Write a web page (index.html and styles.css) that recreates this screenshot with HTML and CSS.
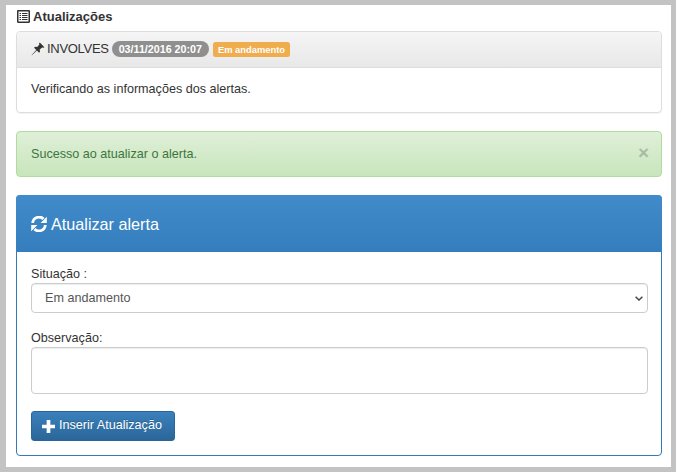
FILE: index.html
```html
<!DOCTYPE html>
<html lang="pt-BR">
<head>
<meta charset="utf-8">
<title>Atualizações</title>
<link rel="stylesheet" href="styles.css">
</head>
<body>
<main class="page">
  <h4 class="title">
    <svg class="ico-list" viewBox="0 0 13 13" width="13" height="13"><path fill="#333" fill-rule="evenodd" d="M0 1.2C0 .5.5 0 1.2 0h10.6c.7 0 1.2.5 1.2 1.2v10.6c0 .7-.5 1.2-1.2 1.2H1.2C.5 13 0 12.500 0 11.800zM1.500 1.500v10h10v-10z"/><path fill="#333" d="M2.500 3h1.500v1H2.500zM5 3h5.500v1H5zM2.500 5h1.500v1H2.500zM5 5h5.500v1H5zM2.500 7h1.500v1H2.500zM5 7h5.500v1H5zM2.500 9h1.500v1H2.500zM5 9h5.500v1H5z"/></svg>
    Atualizações
  </h4>
  <section class="panel">
    <header class="panel-head">
      <svg class="ico-pin" viewBox="0 0 14 14" width="14" height="14"><path fill="#333" d="M8.800 0.600 13.400 5.200 12.500 5.800 11.200 5.400 8.700 7.600 9 9.800 8.100 10.700 5.900 8.500 .8 13.200 .6 13 5.300 7.900 3.100 5.700 4 4.800 6.200 5.100 8.400 2.600 8 1.500z"/></svg>
      <span class="head-name">INVOLVES</span>
      <span class="badge">03/11/2016 20:07</span>
      <span class="label">Em andamento</span>
    </header>
    <div class="panel-text">Verificando as informações dos alertas.</div>
  </section>
  <div class="alert">
    <span>Sucesso ao atualizar o alerta.</span>
    <span class="close">×</span>
  </div>
  <section class="form-panel">
    <header class="form-head">
      <svg class="ico-refresh" viewBox="0 0 16 16" width="16" height="16"><path fill="none" stroke="#fff" stroke-width="2.800" d="M1.700 7A6.300 6.300 0 0 1 12.500 3M14.300 9A6.300 6.300 0 0 1 3.500 13"/><path fill="#fff" d="M15.800 .8V7H9.600zM.2 15.200V9h6.200z"/></svg>
      <span>Atualizar alerta</span>
    </header>
    <form class="form-body">
      <label class="field-label" for="sit">Situação :</label>
      <div class="select-wrap">
        <select id="sit" class="control select"><option>Em andamento</option></select>
        <svg class="chevron" viewBox="0 0 8 5" width="8" height="5"><path fill="none" stroke="#444" stroke-width="1.500" d="M.6.800 4 4 7.400.8"/></svg>
      </div>
      <label class="field-label second" for="obs">Observação:</label>
      <textarea id="obs" class="control area"></textarea>
      <button type="button" class="btn">
        <svg viewBox="0 0 12 12" width="13" height="13"><path fill="#fff" d="M4.300 0h3.400v4.300H12v3.400H7.700V12H4.300V7.700H0V4.300h4.300z"/></svg>
        <span class="btn-text">Inserir Atualização</span>
      </button>
    </form>
  </section>
</main>
</body>
</html>
```
FILE: styles.css
```css
* { box-sizing: border-box; }
html, body { margin: 0; height: 100%; }
body {
  background: #c3c3c3;
  padding: 5px 5px 5px 6px;
  font-family: "Liberation Sans", Arial, sans-serif;
  font-size: 12.600px;
  line-height: 20px;
  color: #333;
}
.page {
  background: #fff;
  height: 462px;
  padding: 0 9px 0 10px;
  display: flex;
  flex-direction: column;
}
.title {
  margin: 0;
  height: 26px;
  padding: 0 0 4px 1px;
  display: flex;
  align-items: center;
  gap: 3px;
  font-weight: 700;
  line-height: 1;
  font-size: 13px;
  flex: none;
}
.panel {
  height: 82px;
  flex: none;
  border: 1px solid #ddd;
  border-radius: 4px;
  box-shadow: 0 1px 1px rgba(0,0,0,.05);
}
.panel-head {
  height: 36px;
  padding: 0 14px;
  display: flex;
  align-items: center;
  background: linear-gradient(#f5f5f5, #e8e8e8);
  border-bottom: 1px solid #ddd;
  border-radius: 3px 3px 0 0;
}
.ico-pin { margin-right: 2px; margin-top: -2px; }
.head-name { font-size: 13px; letter-spacing: -0.300px; margin-top: -1px; }
.badge {
  margin-left: 3px;
  margin-top: -1px;
  height: 16px;
  padding: 0 7px;
  border-radius: 10px;
  background: #8f8f8f;
  color: #fff;
  font-size: 10.700px;
  font-weight: 700;
  line-height: 16px;
}
.label {
  margin-left: 4px;
  height: 15px;
  padding: 0 5px;
  border-radius: 2.500px;
  background: #f0ad4e;
  color: #fff;
  font-size: 9.400px;
  font-weight: 700;
  line-height: 15px;
}
.panel-text { padding: 11px 14px; }
.alert {
  margin-top: 18px;
  height: 46px;
  flex: none;
  padding: 0 14px;
  display: flex;
  align-items: center;
  justify-content: space-between;
  background: linear-gradient(#dff0d8, #c8e5bc);
  border: 1px solid #b2dba1;
  border-radius: 4px;
  color: #3c763d;
}
.close {
  font-size: 19px;
  font-weight: 700;
  color: #000;
  opacity: .2;
  margin: -2px -2px 0 0;
}
.form-panel {
  margin-top: 18px;
  height: 261px;
  flex: none;
  border: 1px solid #337ab7;
  border-radius: 4px;
}
.form-head {
  height: 57px;
  padding: 0 14px 0 15px;
  display: flex;
  align-items: center;
  gap: 4px;
  margin: -1px -1px 0;
  background: linear-gradient(#428bca, #357ebd);
  border-radius: 4px 4px 0 0;
  color: #fff;
  font-size: 16.200px;
}
.form-body {
  padding: 14px 13px 14px 14px;
  display: flex;
  flex-direction: column;
  align-items: stretch;
}
.field-label { height: 17px; line-height: 17px; margin-bottom: 0; }
.second { margin-top: 17px; }
.control {
  display: block;
  width: 100%;
  border: 1px solid #ccc;
  border-radius: 4px;
  background: #fff;
  font: inherit;
  color: #555;
  box-shadow: inset 0 1px 1px rgba(0,0,0,.075);
}
.select-wrap { position: relative; }
.select {
  height: 30px;
  padding: 0 13px;
  appearance: none;
}
.chevron { position: absolute; right: 5px; top: 13px; }
.area { height: 47px; resize: none; }
.btn {
  margin-top: 17px;
  width: 144px;
  height: 30px;
  padding: 0 0 0 10px;
  display: flex;
  align-items: center;
  gap: 4px;
  background: linear-gradient(#3a80bc, #2b6699);
  border: 1px solid #2b6699;
  border-radius: 3px;
  color: #fff;
  font: inherit;
  text-shadow: 0 -1px 0 rgba(0,0,0,.2);
}
.btn-text { margin-top: -2px; }
```
